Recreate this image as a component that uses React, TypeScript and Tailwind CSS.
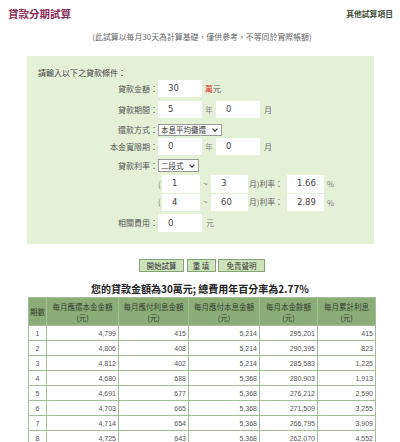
import React from "react";

const rows = [
  ["1", "4,799", "415", "5,214", "295,201", "415"],
  ["2", "4,806", "408", "5,214", "290,395", "823"],
  ["3", "4,812", "402", "5,214", "285,583", "1,225"],
  ["4", "4,680", "688", "5,368", "280,903", "1,913"],
  ["5", "4,691", "677", "5,368", "276,212", "2,590"],
  ["6", "4,703", "665", "5,368", "271,509", "3,255"],
  ["7", "4,714", "654", "5,368", "266,795", "3,909"],
  ["8", "4,725", "643", "5,368", "262,070", "4,552"],
];

function Input({ value, w }: { value: string; w: string }) {
  return (
    <div
      className={`${w} h-full bg-white flex items-center pl-[10px] text-[8.5px] text-[#444] font-['DejaVu_Sans',sans-serif]`}
    >
      {value}
    </div>
  );
}

function Select({ value, w }: { value: string; w: string }) {
  return (
    <div
      className={`${w} h-full bg-white border border-[#9a9a9a] flex items-center justify-between pl-[2px] pr-[3px] text-[7.5px] text-[#333] leading-none`}
    >
      <span>{value}</span>
      <svg width="6" height="4" viewBox="0 0 6 4" className="shrink-0">
        <path d="M0.6 0.6 L3 3.2 L5.4 0.6" fill="none" stroke="#333" strokeWidth="1.1" />
      </svg>
    </div>
  );
}

function Label({ text }: { text: string }) {
  return (
    <div className="w-[131px] shrink-0 text-right text-[8px] text-[#555] leading-none">{text}</div>
  );
}

export default function App() {
  return (
    <div className="w-[400px] h-[442px] overflow-hidden bg-white font-['Noto_Sans_CJK_TC','Noto_Sans_CJK_SC',sans-serif]">
      <div className="h-[28px] flex items-center justify-between pl-[8px] pr-[7px]">
        <span className="text-[10.5px] font-bold text-[#8b2d57] leading-none">貸款分期試算</span>
        <span className="text-[7.8px] font-bold text-[#3d4a37] leading-none">其他試算項目</span>
      </div>
      <div className="mt-[3px] h-[12px] leading-[12px] text-center text-[7.9px] text-[#666] pl-[4px]">
        (此試算以每月30天為計算基礎，僅供參考，不等同於實際帳額)
      </div>

      <div className="mt-[13px] ml-[27px] w-[347px] bg-[#e4f1d6] pt-[11px] pb-[12px] flex flex-col">
        <div className="h-[12px] leading-[12px] pl-[11px] text-[8px] text-[#444]">請輸入以下之貸款條件：</div>

        <div className="mt-[1px] h-[17px] flex items-center">
          <Label text="貸款金額：" />
          <Input value="30" w="w-[44px]" />
          <span className="ml-[3px] text-[8px] leading-none">
            <span className="text-[#d8312b]">萬</span>
            <span className="text-[#666]">元</span>
          </span>
        </div>

        <div className="mt-[4px] h-[17px] flex items-center">
          <Label text="貸款期間：" />
          <Input value="5" w="w-[44px]" />
          <span className="w-[14px] text-center text-[7.5px] text-[#888] leading-none">年</span>
          <Input value="0" w="w-[44px]" />
          <span className="ml-[4px] text-[8px] text-[#666] leading-none">月</span>
        </div>

        <div className="mt-[6px] h-[12px] flex items-center">
          <Label text="還款方式：" />
          <Select value="本息平均攤還" w="w-[64px]" />
        </div>

        <div className="mt-[2px] h-[17px] flex items-center">
          <Label text="本金寬限期：" />
          <Input value="0" w="w-[44px]" />
          <span className="w-[14px] text-center text-[7.5px] text-[#888] leading-none">年</span>
          <Input value="0" w="w-[44px]" />
          <span className="ml-[4px] text-[8px] text-[#666] leading-none">月</span>
        </div>

        <div className="mt-[4px] h-[13px] flex items-center">
          <Label text="貸款利率：" />
          <Select value="二段式" w="w-[41px]" />
        </div>

        {[
          ["1", "3", "1.66", "mt-[3px]"],
          ["4", "60", "2.89", "mt-[1px]"],
        ].map(([a, b, r, mt]) => (
          <div key={a} className={`${mt} h-[17.5px] flex items-center`}>
            <div className="w-[131px] shrink-0" />
            <span className="w-[4px] text-[8px] text-[#777] leading-none">(</span>
            <Input value={a} w="w-[38px]" />
            <span className="w-[11px] text-center text-[8px] text-[#777] leading-none">~</span>
            <Input value={b} w="w-[37px]" />
            <span className="w-[39px] pl-[1px] text-[7.8px] text-[#666] leading-none whitespace-nowrap">月)利率：</span>
            <Input value={r} w="w-[37px]" />
            <span className="ml-[3px] text-[7.5px] text-[#777] leading-none">%</span>
          </div>
        ))}

        <div className="mt-[3px] h-[18px] flex items-center">
          <Label text="相關費用：" />
          <Input value="0" w="w-[44px]" />
          <span className="ml-[4px] text-[8px] text-[#888] leading-none">元</span>
        </div>
      </div>

      <div className="mt-[15px] h-[13px] flex justify-center gap-[2.5px] pl-[4px]">
        {[
          ["開始試算", "w-[45px]"],
          ["重 填", "w-[29px]"],
          ["免責聲明", "w-[47px]"],
        ].map(([t, w]) => (
          <div
            key={t}
            className={`${w} h-full bg-[#cfe3bb] border border-[#86a274] flex items-center justify-center text-[7.5px] text-[#333] leading-none`}
          >
            {t}
          </div>
        ))}
      </div>

      <div className="mt-[11px] h-[12px] leading-[12px] text-center text-[10px] font-bold text-[#222]">
        您的貸款金額為30萬元; 總費用年百分率為2.77%
      </div>

      <table className="mt-[2px] ml-[28px] w-[347px] border-collapse table-fixed">
        <colgroup>
          <col className="w-[18px]" />
          <col className="w-[72px]" />
          <col className="w-[70px]" />
          <col className="w-[71px]" />
          <col className="w-[58px]" />
          <col className="w-[58px]" />
        </colgroup>
        <thead>
          <tr className="h-[28px] bg-[#8aad79]">
            <th className="border border-[#a3bd96] text-[7.5px] font-normal text-[#34402f] leading-[11px] p-0">期數</th>
            {["每月應還本金金額", "每月應付利息金額", "每月應付本息金額", "每月本金餘額", "每月累計利息"].map((h) => (
              <th key={h} className="border border-[#a3bd96] text-[7.5px] font-normal text-[#34402f] leading-[11px] p-0">
                {h}
                <br />
                (元)
              </th>
            ))}
          </tr>
        </thead>
        <tbody>
          {rows.map((r) => (
            <tr key={r[0]} className="h-[15px]">
              {r.map((c, i) => (
                <td
                  key={i}
                  className={`border border-[#a3bd96] p-0 text-[7px] leading-none text-[#555] font-['Liberation_Sans',sans-serif] ${
                    i === 0 ? "text-center" : "text-right pr-[2px]"
                  }`}
                >
                  {c}
                </td>
              ))}
            </tr>
          ))}
        </tbody>
      </table>
    </div>
  );
}
